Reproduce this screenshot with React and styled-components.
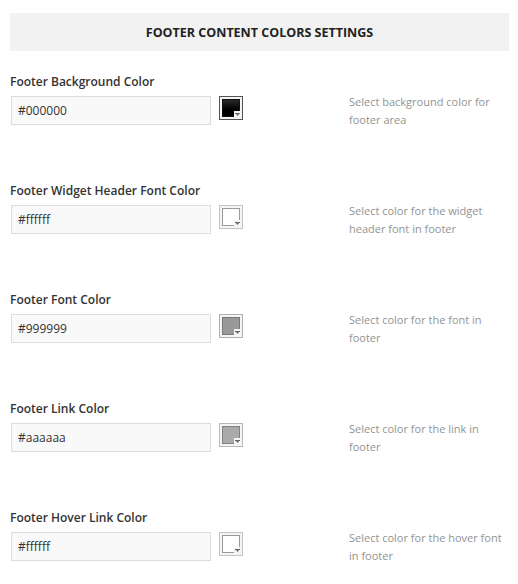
import React from "react";
import styled, { createGlobalStyle } from "styled-components";

const Global = createGlobalStyle`
  html, body { margin: 0; padding: 0; background: #fff; }
  body { font-family: "Open Sans", "Liberation Sans", sans-serif; }
`;

const Page = styled.div`
  width: 518px;
  padding: 13px 0 0 10px;
  box-sizing: border-box;
`;

const Header = styled.div`
  width: 499px;
  height: 38px;
  background: #f2f2f2;
  display: flex;
  align-items: center;
  justify-content: center;
  font-size: 12.5px;
  font-weight: 700;
  color: #222;
  margin-bottom: 22px;
`;

const List = styled.div`
  display: flex;
  flex-direction: column;
  gap: 53px;
`;

const Row = styled.div`
  display: flex;
  align-items: flex-start;
`;

const Left = styled.div`
  display: flex;
  flex-direction: column;
  gap: 5px;
  width: 339px;
`;

const Label = styled.div`
  font-size: 12px;
  line-height: 18px;
  font-weight: 600;
  color: #333;
`;

const Field = styled.div`
  display: flex;
  align-items: center;
  gap: 8px;
`;

const Input = styled.div`
  width: 200px;
  height: 29px;
  box-sizing: border-box;
  margin-left: 1px;
  border: 1px solid #dddddd;
  background: #f9f9f9;
  display: flex;
  align-items: center;
  padding-left: 6px;
  font-size: 12px;
  color: #333;
`;

const Swatch = styled.div`
  position: relative;
  width: 24px;
  height: 24px;
  box-sizing: border-box;
  border: 1px solid ${(p) => p.$ring};
  background: #f4f4f4;
  padding: 2px;
  margin-top: -5px;
`;

const Chip = styled.div`
  width: 18px;
  height: 18px;
  box-sizing: border-box;
  border: 1px solid ${(p) => p.$edge};
  background: ${(p) => p.$fill};
`;

const Notch = styled.div`
  position: absolute;
  right: 1px;
  bottom: 1px;
  width: 7px;
  height: 7px;
  background: #f4f4f4;
  display: flex;
  align-items: center;
  justify-content: center;
`;

const Desc = styled.div`
  margin-top: 20px;
  font-size: 11px;
  line-height: 18px;
  color: #939393;
  width: 165px;
`;

const rows = [
  { label: "Footer Background Color", value: "#000000", fill: "linear-gradient(180deg,#2a2a2a,#000 60%)", edge: "#111", ring: "#555", desc: ["Select background color for", "footer area"] },
  { label: "Footer Widget Header Font Color", value: "#ffffff", fill: "#fff", edge: "#9a9a9a", ring: "#c4c4c4", desc: ["Select color for the widget", "header font in footer"] },
  { label: "Footer Font Color", value: "#999999", fill: "#999", edge: "#777", ring: "#b0b0b0", desc: ["Select color for the font in", "footer"] },
  { label: "Footer Link Color", value: "#aaaaaa", fill: "#aaa", edge: "#808080", ring: "#b8b8b8", desc: ["Select color for the link in", "footer"] },
  { label: "Footer Hover Link Color", value: "#ffffff", fill: "#fff", edge: "#9a9a9a", ring: "#c4c4c4", desc: ["Select color for the hover font", "in footer"] },
];

export default function App() {
  return (
    <Page>
      <Global />
      <Header>FOOTER CONTENT COLORS SETTINGS</Header>
      <List>
        {rows.map((r) => (
          <Row key={r.label}>
            <Left>
              <Label>{r.label}</Label>
              <Field>
                <Input>{r.value}</Input>
                <Swatch $ring={r.ring}>
                  <Chip $fill={r.fill} $edge={r.edge} />
                  <Notch>
                    <svg width="5" height="4" viewBox="0 0 5 4">
                      <path d="M0 0h5v1H0zM1 1h3l-1.5 2z" fill="#666" />
                    </svg>
                  </Notch>
                </Swatch>
              </Field>
            </Left>
            <Desc>
              {r.desc[0]}
              <br />
              {r.desc[1]}
            </Desc>
          </Row>
        ))}
      </List>
    </Page>
  );
}
